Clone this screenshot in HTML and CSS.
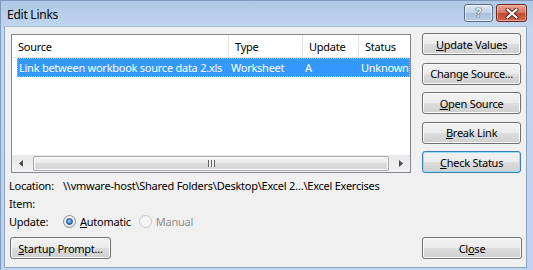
FILE: index.html
```html
<!DOCTYPE html>
<html lang="en">
<head>
    <meta charset="UTF-8">
    <meta name="viewport" content="width=device-width, initial-scale=1.0">
    <title>Edit Links</title>
    <link rel="stylesheet" href="styles.css">
</head>
<body>
    <div class="window">
        <div class="titlebar">
            <span class="title">Edit Links</span>
            <div class="caption-buttons">
                <div class="cap-btn help">?</div>
                <div class="cap-btn close">
                    <svg width="14" height="11" viewBox="0 0 14 11">
                        <path d="M2.5 1.5 L11.5 9.5 M11.5 1.5 L2.5 9.5" stroke="#5a1e14" stroke-width="4" stroke-linecap="round"/>
                        <path d="M2.5 1.5 L11.5 9.5 M11.5 1.5 L2.5 9.5" stroke="#ffffff" stroke-width="2.2" stroke-linecap="round"/>
                    </svg>
                </div>
            </div>
        </div>

        <div class="client">
            <div class="top-row">
                <div class="listview">
                    <div class="lv-header">
                        <div class="col col-source">Source</div>
                        <div class="col col-type">Type</div>
                        <div class="col col-update">Update</div>
                        <div class="col col-status">Status</div>
                    </div>
                    <div class="lv-body">
                        <div class="lv-row selected">
                            <div class="col col-source">Link between workbook source data 2.xls</div>
                            <div class="col col-type">Worksheet</div>
                            <div class="col col-update">A</div>
                            <div class="col col-status">Unknown</div>
                        </div>
                    </div>
                    <div class="hscroll">
                        <div class="arrow">
                            <svg width="4" height="7" viewBox="0 0 4 7"><path d="M4 0 L0 3.5 L4 7 Z" fill="#4a4a4a"/></svg>
                        </div>
                        <div class="thumb"><span class="grip"></span></div>
                        <div class="arrow">
                            <svg width="4" height="7" viewBox="0 0 4 7"><path d="M0 0 L4 3.5 L0 7 Z" fill="#4a4a4a"/></svg>
                        </div>
                    </div>
                </div>

                <div class="side-buttons">
                    <button class="btn"><u>U</u>pdate Values</button>
                    <button class="btn">Chan<u>g</u>e Source...</button>
                    <button class="btn"><u>O</u>pen Source</button>
                    <button class="btn"><u>B</u>reak Link</button>
                    <button class="btn focused"><u>C</u>heck Status</button>
                </div>
            </div>

            <div class="info">
                <div class="info-row">
                    <span class="label">Location:</span>
                    <span class="value">\\vmware-host\Shared Folders\Desktop\Excel 2…\Excel Exercises</span>
                </div>
                <div class="info-row">
                    <span class="label">Item:</span>
                </div>
                <div class="info-row">
                    <span class="label">Update:</span>
                    <span class="radio checked"><span class="circle"></span><span><u>A</u>utomatic</span></span>
                    <span class="radio disabled"><span class="circle"></span><span>Manual</span></span>
                </div>
            </div>

            <div class="bottom-row">
                <button class="btn startup"><u>S</u>tartup Prompt...</button>
                <button class="btn close-btn">Cl<u>o</u>se</button>
            </div>
        </div>
    </div>
</body>
</html>
```

FILE: styles.css
```css
body {
    margin: 0;
    padding: 0;
    font-family: "Noto Sans", "Open Sans", sans-serif;
    font-size: 11px;
    letter-spacing: -0.25px;
    color: #000;
}

.window {
    width: 533px;
    height: 270px;
    box-sizing: border-box;
    display: flex;
    flex-direction: column;
    background: linear-gradient(#b0c8e6, #c2d7ef 30px, #bdd3ee);
    border-top: 1px solid #7f9cbe;
    border-left: 1px solid #7f9cbe;
    padding: 0 6px 2px 3px;
    overflow: hidden;
}

.titlebar {
    height: 25px;
    display: flex;
    align-items: center;
    justify-content: space-between;
    flex-shrink: 0;
}

.title {
    font-size: 12px;
    padding-left: 3px;
    padding-top: 2px;
    color: #000;
}

.caption-buttons {
    display: flex;
    gap: 3px;
    align-self: flex-start;
    margin-top: 3px;
    margin-right: 0;
}

.cap-btn {
    height: 18px;
    border: 1px solid #5b6d86;
    border-radius: 3px;
    box-sizing: border-box;
    display: flex;
    align-items: center;
    justify-content: center;
}

.cap-btn.help {
    width: 29px;
    background: linear-gradient(#dbe6f3, #c1d3ea 50%, #a9bfdc 50%, #b9cde6);
    box-shadow: inset 0 0 0 1px rgba(255, 255, 255, 0.6);
    font-weight: bold;
    font-size: 12px;
    color: #f4f7fb;
    text-shadow: 0 0 1px #3d4e66, 0 0 1px #3d4e66, 0 0 1px #3d4e66;
    line-height: 16px;
}

.cap-btn.close {
    width: 31px;
    border-color: #6b2a1f;
    background: linear-gradient(#e8a493, #d47560 50%, #c2482f 50%, #d0674f);
    box-shadow: inset 0 0 0 1px rgba(255, 210, 200, 0.5);
}

.client {
    flex: 1;
    background-color: #f0f0f0;
    border: 1px solid #8da3bd;
    border-top-color: #a5b9d1;
    padding: 7px 5px 0 4px;
    display: flex;
    flex-direction: column;
}

.top-row {
    display: flex;
    gap: 11px;
    padding-left: 2px;
}

.listview {
    width: 401px;
    height: 139px;
    box-sizing: border-box;
    border: 1px solid #828790;
    background-color: #fff;
    display: flex;
    flex-direction: column;
    overflow: hidden;
}

.lv-header {
    display: flex;
    height: 22px;
    border-bottom: 1px solid #e5e5e5;
    flex-shrink: 0;
}

.lv-header .col {
    border-right: 1px solid #e5e5e5;
    line-height: 24px;
    padding-left: 6px;
}

.col {
    box-sizing: border-box;
    white-space: nowrap;
    overflow: hidden;
    flex-shrink: 0;
}

.col-source { width: 217px; }
.col-type { width: 74px; }
.col-update { width: 56px; }
.col-status { width: 60px; }

.lv-body {
    flex: 1;
}

.lv-row {
    display: flex;
    height: 19px;
    margin-left: 5px;
    line-height: 17px;
}

.lv-row .col {
    padding-left: 1px;
}

.lv-row .col-source { width: 212px; }

.lv-row.selected {
    background-color: #3399ff;
    color: #fff;
    border: 1px dotted #ffb05a;
    box-sizing: border-box;
}

.hscroll {
    height: 17px;
    display: flex;
    align-items: center;
    background: linear-gradient(#e8e8e8, #f2f2f2);
    flex-shrink: 0;
}

.arrow {
    width: 18px;
    height: 17px;
    display: flex;
    align-items: center;
    justify-content: center;
}

.thumb {
    flex: 1;
    height: 15px;
    margin: 0 3px;
    box-sizing: border-box;
    border: 1px solid #a8a8a8;
    border-radius: 2px;
    background: linear-gradient(#f5f5f5, #e9e9e9 50%, #dcdcdc 50%, #d4d4d4);
    box-shadow: inset 0 0 0 1px #fbfbfb;
    display: flex;
    align-items: center;
    justify-content: center;
}

.grip {
    width: 7px;
    height: 7px;
    background: repeating-linear-gradient(90deg, #5f5f5f 0 1px, #f4f4f4 1px 3px);
}

.side-buttons {
    width: 99px;
    display: flex;
    flex-direction: column;
    gap: 7.6px;
    margin-top: -1px;
}

.btn {
    height: 22px;
    box-sizing: border-box;
    border: 1px solid #707070;
    border-radius: 3px;
    background: linear-gradient(#f2f2f2, #ebebeb 50%, #dddddd 50%, #cfcfcf);
    box-shadow: inset 0 0 0 1px #fafafa;
    font-family: inherit;
    font-size: 11px;
    letter-spacing: inherit;
    color: #000;
    padding: 0;
    cursor: pointer;
}

.btn.focused {
    border-color: #3c7fb1;
    box-shadow: inset 0 0 0 1px #98def8;
}

.info {
    margin-top: 3px;
    display: flex;
    flex-direction: column;
}

.info-row {
    height: 18px;
    display: flex;
    align-items: center;
}

.label {
    width: 54px;
    flex-shrink: 0;
}

.radio {
    display: flex;
    align-items: center;
    gap: 4px;
    margin-right: 8px;
}

.radio .circle {
    width: 13px;
    height: 13px;
    box-sizing: border-box;
    border-radius: 50%;
    border: 1px solid #8e8f8f;
    background: radial-gradient(circle at 50% 35%, #ffffff, #dcdcdc);
    display: flex;
    align-items: center;
    justify-content: center;
}

.radio.checked .circle::after {
    content: "";
    width: 7px;
    height: 7px;
    box-sizing: border-box;
    border-radius: 50%;
    border: 1px solid #1c4f8c;
    background: radial-gradient(circle at 45% 40%, #9ad7ff, #2f7fd0 60%, #1b5ba8);
}

.radio.disabled {
    color: #8d8d8d;
}

.radio.disabled .circle {
    border-color: #c8c8c8;
    background: #f4f4f4;
}

.bottom-row {
    margin-top: 7px;
    display: flex;
    justify-content: space-between;
}

.btn.startup {
    width: 101px;
    margin-left: 1px;
}

.btn.close-btn {
    width: 100px;
    margin-right: -1px;
}
```
